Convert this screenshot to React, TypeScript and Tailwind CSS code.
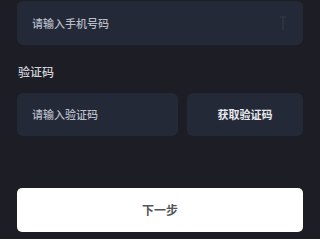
export default function App() {
  return (
    <div className="w-[320px] h-[239px] overflow-hidden bg-[#1c1d25] font-['Noto_Sans_CJK_SC','Noto_Sans',sans-serif]">
      <div className="px-[17px] pt-px flex flex-col">
        {/* phone input */}
        <div className="h-[44px] rounded-[6px] bg-[#232937] flex items-center justify-between pl-[15px] pr-[16px]">
          <span className="text-[11px] font-medium text-[#b9bdc7]">请输入手机号码</span>
          <svg width="8" height="15" viewBox="0 0 8 15" className="opacity-15">
            <path d="M1 1h6M4 1v13" stroke="#8b93a6" strokeWidth="1.2" fill="none" />
          </svg>
        </div>

        {/* label */}
        <div className="mt-[20px] pl-px text-[12px] font-medium leading-[14px] text-[#d2d3d8]">验证码</div>

        {/* code row */}
        <div className="mt-[14px] flex gap-[9px]">
          <div className="w-[161px] h-[43px] rounded-[6px] bg-[#232937] flex items-center pl-[15px]">
            <span className="text-[11px] font-medium text-[#b9bdc7]">请输入验证码</span>
          </div>
          <button className="flex-1 h-[43px] rounded-[6px] bg-[#232937] flex items-center justify-center text-[11px] font-bold text-[#e8e9ee]">
            获取验证码
          </button>
        </div>

        {/* next */}
        <button className="mt-[52px] h-[44px] rounded-[5px] bg-white flex items-center justify-center text-[12px] font-bold text-[#555659]">
          下一步
        </button>
      </div>
    </div>
  );
}
